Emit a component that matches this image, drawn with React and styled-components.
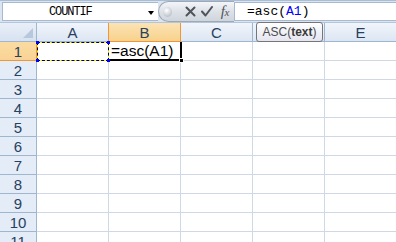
import React from "react";
import styled, { createGlobalStyle } from "styled-components";

const Global = createGlobalStyle`
  html, body { margin: 0; padding: 0; background: #ffffff; overflow: hidden; }
  body { font-family: "Liberation Sans", Arial, sans-serif; }
  * { box-sizing: border-box; }
`;

const Page = styled.div`
  width: 396px;
  height: 242px;
  overflow: hidden;
  background: #ffffff;
  display: flex;
  flex-direction: column;
`;

const FormulaBar = styled.div`
  height: 22px;
  display: flex;
  align-items: stretch;
  background: #dbe5f1;
  border-top: 1px solid #a9bdd5;
  padding: 1px 0 1px 2px;
`;

const NameBox = styled.div`
  width: 156px;
  display: flex;
  align-items: center;
  background: #ffffff;
  border: 1px solid #a6b9d1;
  border-right: none;
  position: relative;
`;

const NameText = styled.span`
  font-family: "Liberation Mono", "DejaVu Sans Mono", monospace;
  font-size: 12px;
  letter-spacing: -1.1px;
  color: #000;
  margin-left: 46px;
`;

const DropArrow = styled.span`
  position: absolute;
  left: 145px;
  top: 8px;
  width: 0;
  height: 0;
  border-left: 3.5px solid transparent;
  border-right: 3.5px solid transparent;
  border-top: 4px solid #000;
`;

const Pill = styled.div`
  width: 76px;
  margin-top: -1px;
  margin-bottom: -1px;
  display: flex;
  align-items: center;
  background: linear-gradient(#f3f5f8, #dde2e8 50%, #cfd5dc);
  border: 1px solid #9fa9b6;
  border-right: none;
  border-radius: 11px 0 0 11px;
  padding-left: 4px;
`;

const Ball = styled.span`
  width: 10px;
  height: 10px;
  border-radius: 50%;
  background: radial-gradient(circle at 40% 35%, #ffffff, #c9ced4 60%, #a7adb5);
  margin-right: 10px;
`;

const IconSlot = styled.span`
  display: flex;
  align-items: center;
  justify-content: center;
  width: ${(p) => p.$w}px;
  height: 20px;
`;

const Fx = styled.span`
  font-family: "Liberation Serif", "DejaVu Serif", serif;
  font-style: italic;
  font-size: 15px;
  color: #4f545b;
  letter-spacing: -0.5px;
  span { font-size: 11px; }
`;

const FormulaInput = styled.div`
  flex: 1;
  display: flex;
  align-items: center;
  background: #ffffff;
  border: 1px solid #a6b9d1;
  border-right: none;
  padding-left: 12px;
  font-family: "Liberation Mono", "DejaVu Sans Mono", monospace;
  font-size: 13px;
  color: #000;
`;

const Ref = styled.span`
  color: #0000ff;
`;

const Strip = styled.div`
  height: 4px;
  background: #dbe5f1;
  border-top: 1px solid #b4c6dc;
`;

const Sheet = styled.div`
  position: relative;
  flex: 1;
  display: grid;
  grid-template-columns: 37px repeat(5, 72px);
  grid-auto-rows: 19px;
  background: #ffffff;
`;

const Corner = styled.div`
  position: relative;
  background: linear-gradient(#e9eff8, #d7e2f0);
  border-right: 1px solid #9eb6ce;
  border-bottom: 1px solid #9eb6ce;
  &::after {
    content: "";
    position: absolute;
    right: 3px;
    bottom: 3px;
    width: 0;
    height: 0;
    border-left: 10px solid transparent;
    border-bottom: 10px solid #b7c8dd;
  }
`;

const ColHead = styled.div`
  display: flex;
  align-items: center;
  justify-content: center;
  font-family: "Liberation Sans", Arial, sans-serif;
  font-size: 15px;
  color: #27415f;
  background: ${(p) =>
    p.$active
      ? "linear-gradient(#fbe3b3, #f8d28d)"
      : "linear-gradient(#f1f5fb, #dce6f2)"};
  border-right: 1px solid ${(p) => (p.$active ? "#f29536" : "#9eb6ce")};
  border-bottom: 1px solid ${(p) => (p.$active ? "#f29536" : "#9eb6ce")};
  ${(p) => (p.$active ? "border-left: 1px solid #f29536; margin-left: -1px;" : "")}
`;

const RowHead = styled.div`
  display: flex;
  align-items: center;
  justify-content: center;
  font-family: "Liberation Sans", Arial, sans-serif;
  font-size: 15px;
  color: #27415f;
  background: ${(p) => (p.$active ? "linear-gradient(#fbdba2, #f9d394)" : "#e4ecf7")};
  border-right: 1px solid ${(p) => (p.$active ? "#f29536" : "#9eb6ce")};
  border-bottom: 1px solid ${(p) => (p.$active ? "#f29536" : "#9eb6ce")};
`;

const Cell = styled.div`
  border-right: 1px solid #d0d7e5;
  border-bottom: 1px solid #d0d7e5;
  font-family: "Liberation Sans", Arial, sans-serif;
  font-size: 15.5px;
  color: #000;
  display: flex;
  align-items: center;
  padding-left: 2px;
  white-space: nowrap;
`;

const Ants = styled.div`
  position: absolute;
  left: 37px;
  top: 19px;
  width: 72px;
  height: 19px;
  &::before, &::after {
    content: "";
    position: absolute;
    inset: 0;
  }
  &::before { border: 1px solid #ffff00; }
  &::after { border: 1px dashed #000050; }
`;

const Knob = styled.span`
  position: absolute;
  z-index: 2;
  width: 3px;
  height: 3px;
  background: ${(p) => p.$c};
  ${(p) => p.$pos}
`;

const ActiveFrame = styled.div`
  position: absolute;
  left: 109px;
  top: 19px;
  width: 73px;
  height: 19px;
  border-right: 2px solid #000;
  border-bottom: 2px solid #000;
  pointer-events: none;
`;

const FillHandle = styled.span`
  position: absolute;
  right: -4px;
  bottom: -4px;
  width: 5px;
  height: 5px;
  background: #000;
  border: 1px solid #fff;
`;

const Tip = styled.div`
  position: absolute;
  z-index: 3;
  left: 256px;
  top: -1px;
  width: 67px;
  height: 20px;
  border: 1px solid #767676;
  border-radius: 3px;
  background: linear-gradient(#ffffff, #e4e5f0);
  display: flex;
  align-items: center;
  justify-content: center;
  font-family: "Liberation Sans", Arial, sans-serif;
  font-size: 12px;
  color: #4c4c4c;
  b { font-weight: bold; color: #3b3b3b; }
`;

const cols = ["A", "B", "C", "D", "E"];
const rows = Array.from({ length: 11 }, (_, i) => i + 1);

export default function App() {
  return (
    <Page>
      <Global />
      <FormulaBar>
        <NameBox>
          <NameText>COUNTIF</NameText>
          <DropArrow />
        </NameBox>
        <Pill>
          <Ball />
          <IconSlot $w={18}>
            <svg width="11" height="11" viewBox="0 0 11 11">
              <path d="M1.5 1.5 L9.5 9.5 M9.5 1.5 L1.5 9.5" stroke="#4f545b" strokeWidth="2" strokeLinecap="round" />
            </svg>
          </IconSlot>
          <IconSlot $w={18}>
            <svg width="12" height="11" viewBox="0 0 12 11">
              <path d="M1 5.5 L4.5 9.5 L11 1" stroke="#4f545b" strokeWidth="2" fill="none" strokeLinecap="round" strokeLinejoin="round" />
            </svg>
          </IconSlot>
          <IconSlot $w={20}>
            <Fx>f<span>x</span></Fx>
          </IconSlot>
        </Pill>
        <FormulaInput>
          =asc(<Ref>A1</Ref>)
        </FormulaInput>
      </FormulaBar>
      <Strip />
      <Sheet>
        <Corner />
        {cols.map((c) => (
          <ColHead key={c} $active={c === "B"}>{c === "D" ? "" : c}</ColHead>
        ))}
        {rows.map((r) => (
          <React.Fragment key={r}>
            <RowHead $active={r === 1}>{r}</RowHead>
            {cols.map((c) => (
              <Cell key={c}>{r === 1 && c === "B" ? "=asc(A1)" : ""}</Cell>
            ))}
          </React.Fragment>
        ))}
        <Ants>
          <Knob $c="#0000ff" $pos="left:-1px;top:-1px;" />
          <Knob $c="#0000ff" $pos="left:-1px;bottom:-1px;" />
          <Knob $c="#0000ff" $pos="right:-1px;top:-1px;" />
          <Knob $c="#0000ff" $pos="right:-1px;bottom:-1px;" />
        </Ants>
        <ActiveFrame>
          <FillHandle />
        </ActiveFrame>
        <Tip>
          ASC(<b>text</b>)
        </Tip>
      </Sheet>
    </Page>
  );
}
